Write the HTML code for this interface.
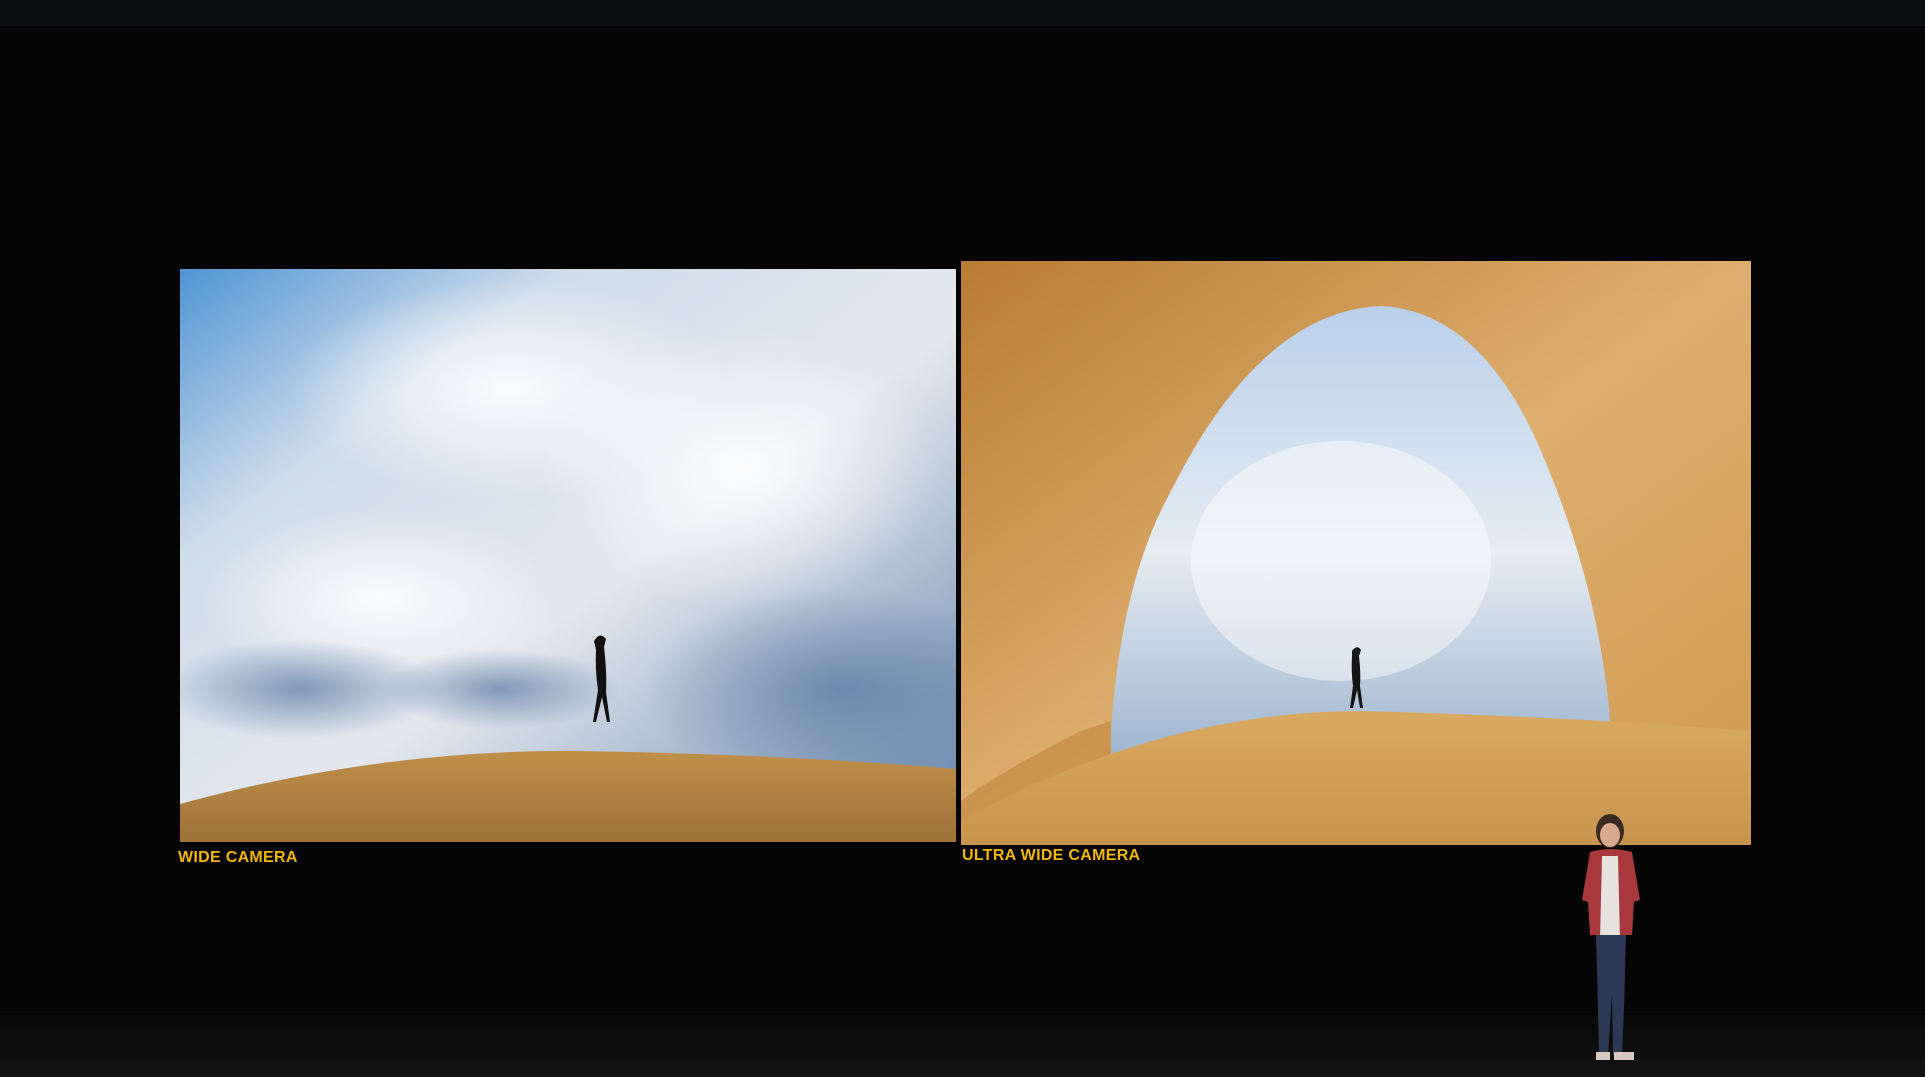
<!DOCTYPE html>
<html><head><meta charset="utf-8"><style>
html,body{margin:0;padding:0;background:#050505;width:1925px;height:1077px;overflow:hidden;position:relative;font-family:"Liberation Sans",sans-serif}
.top{position:absolute;left:0;top:0;width:1925px;height:26px;background:#0c0e11}
.floor{position:absolute;left:0;top:1015px;width:1925px;height:62px;background:linear-gradient(#090909,#121212)}
.p{position:absolute;overflow:hidden}
.lbl{position:absolute;color:#f2b705;font-weight:bold;font-size:16px;letter-spacing:0.3px}
</style></head><body>
<div class="top"></div>
<div class="floor"></div>
<div class="p" style="left:180px;top:269px;width:776px;height:573px">
<svg width="776" height="573" viewBox="0 0 776 573">
<defs>
<linearGradient id="sky" x1="0" y1="0" x2="1" y2="1"><stop offset="0" stop-color="#4f95d4"/><stop offset="0.25" stop-color="#cfdcea"/><stop offset="0.55" stop-color="#e3e8ee"/><stop offset="1" stop-color="#6482aa"/></linearGradient>
<linearGradient id="sand" x1="0" y1="0" x2="0" y2="1"><stop offset="0" stop-color="#c0904a"/><stop offset="1" stop-color="#9e7138"/></linearGradient>
<radialGradient id="cl" cx="0.5" cy="0.5" r="0.5"><stop offset="0" stop-color="#fff" stop-opacity="0.9"/><stop offset="1" stop-color="#fff" stop-opacity="0"/></radialGradient>
<radialGradient id="dk" cx="0.5" cy="0.5" r="0.5"><stop offset="0" stop-color="#5a78a0" stop-opacity="0.7"/><stop offset="1" stop-color="#5a78a0" stop-opacity="0"/></radialGradient>
</defs>
<rect width="776" height="573" fill="url(#sky)"/>
<ellipse cx="330" cy="120" rx="220" ry="110" fill="url(#cl)"/>
<ellipse cx="560" cy="200" rx="200" ry="140" fill="url(#cl)"/>
<ellipse cx="200" cy="330" rx="180" ry="90" fill="url(#cl)"/>
<ellipse cx="660" cy="420" rx="200" ry="100" fill="url(#dk)"/>
<ellipse cx="120" cy="420" rx="140" ry="50" fill="url(#dk)"/>
<ellipse cx="320" cy="420" rx="120" ry="40" fill="url(#dk)"/>
<path d="M0 535 Q200 480 400 482 Q600 485 776 500 L776 573 L0 573Z" fill="url(#sand)"/>
<path d="M414 372 q6-10 12-2 l-2 8 q3 25 2 45 l4 30 h-3 l-5-25 l-6 25 h-3 l5-32 q-3-20-2-40z" fill="#111"/>
</svg></div>
<div class="p" style="left:961px;top:261px;width:790px;height:584px">
<svg width="790" height="584" viewBox="0 0 790 584">
<defs>
<linearGradient id="rock" x1="0" y1="0" x2="1" y2="1"><stop offset="0" stop-color="#b97c35"/><stop offset="0.5" stop-color="#deae6e"/><stop offset="1" stop-color="#cf9a52"/></linearGradient>
<linearGradient id="sky2" x1="0" y1="0" x2="0" y2="1"><stop offset="0" stop-color="#b9d0ea"/><stop offset="0.5" stop-color="#e6ecf2"/><stop offset="1" stop-color="#8fa9c8"/></linearGradient>
<linearGradient id="sand2" x1="0" y1="0" x2="0" y2="1"><stop offset="0" stop-color="#d9a962"/><stop offset="1" stop-color="#c8944e"/></linearGradient>
</defs>
<rect width="790" height="584" fill="url(#rock)"/>
<path d="M150 470 Q160 320 210 230 Q300 50 420 45 Q520 50 580 190 Q640 330 650 470 L650 540 L150 540Z" fill="url(#sky2)"/>
<ellipse cx="380" cy="300" rx="150" ry="120" fill="#fff" opacity="0.45"/>
<path d="M0 540 Q40 510 120 470 L150 460 L150 520 L0 584Z" fill="#c0843e" opacity="0.6"/>
<path d="M0 560 Q200 450 400 450 Q600 455 790 470 L790 584 L0 584Z" fill="url(#sand2)"/>
<path d="M391 390 q5-7 9-1 l-2 6 q2 18 1 30 l3 22 h-3 l-3-18 l-4 18 h-3 l3-22 q-2-15-1-30z" fill="#151515"/>
</svg></div>
<div class="lbl" style="left:178px;top:849px">WIDE CAMERA</div>
<div class="lbl" style="left:962px;top:847px">ULTRA WIDE CAMERA</div>
<svg style="position:absolute;left:1560px;top:810px" width="120" height="260" viewBox="0 0 120 260">
<ellipse cx="50" cy="21" rx="14" ry="17" fill="#3a2a22"/>
<ellipse cx="50" cy="25" rx="10" ry="12" fill="#d9a88e"/>
<path d="M30 42 Q50 36 72 42 L80 90 L74 92 L72 125 L30 125 L28 92 L22 90Z" fill="#a8383c"/>
<path d="M42 46 L58 46 L60 130 L40 130Z" fill="#e8e2de"/>
<path d="M36 125 L66 125 L64 200 L62 245 L53 245 L52 185 L48 245 L39 245 L38 200Z" fill="#2b3954"/>
<rect x="36" y="242" width="14" height="8" fill="#d8c8c0"/><rect x="54" y="242" width="20" height="8" fill="#d8c8c0"/>
</svg>
</body></html>
